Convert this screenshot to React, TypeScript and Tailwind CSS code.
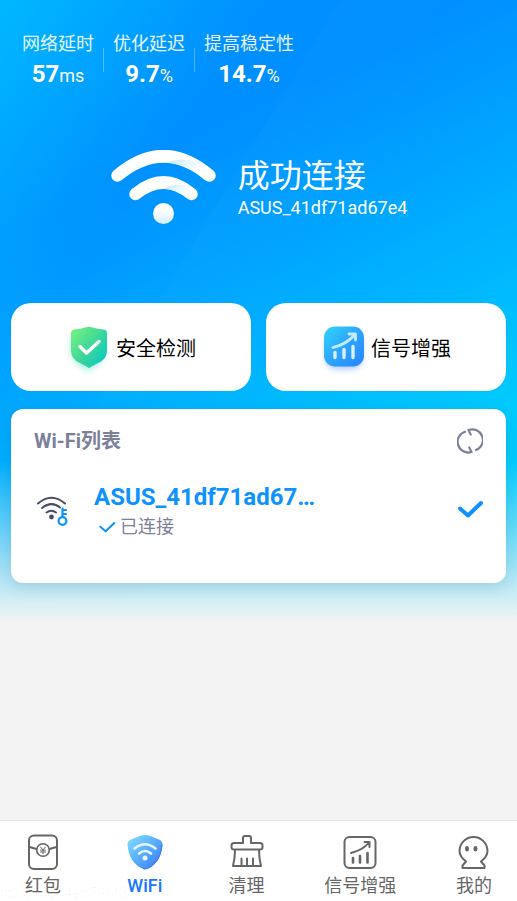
import type { ReactNode } from "react";

const strokeProps = {
  fill: "none",
  stroke: "currentColor",
  strokeLinecap: "round" as const,
  strokeLinejoin: "round" as const,
};

function HeroWifi() {
  return (
    <svg width="108" height="76" viewBox="0 0 108 76" aria-hidden="true">
      <defs>
        <linearGradient id="dot" x1="0" y1="0" x2="0" y2="1">
          <stop offset="0.3" stopColor="#fff" />
          <stop offset="1" stopColor="#d3eefd" />
        </linearGradient>
        <linearGradient id="sheen" x1="0" y1="0" x2="1" y2="0.6">
          <stop offset="0" stopColor="#b9e4fc" />
          <stop offset="0.8" stopColor="#fff" />
        </linearGradient>
      </defs>
      <g fill="none" stroke="#fff" strokeWidth="12.500" strokeLinecap="round">
        <path d="M7.500 25.500Q53.500 -13 99.500 25.500" />
        <path d="M25.500 44Q53.500 21 81.500 44" />
      </g>
      <path d="M54 12.400Q71 7.500 89 12L100 25Q98 31 94.500 30Q76 12.600 54 12.400Z" fill="url(#sheen)" opacity="0.800" />
      <path d="M54 38.700Q64 33 75 35L84 44Q81 50 78 49Q66 38.700 54 38.700Z" fill="url(#sheen)" opacity="0.800" />
      <circle cx="53.500" cy="63.500" r="10.500" fill="url(#dot)" />
    </svg>
  );
}

function ShieldCheck() {
  return (
    <svg width="52" height="52" viewBox="0 0 52 52" aria-hidden="true">
      <defs>
        <linearGradient id="shieldL" x1="0" y1="0" x2="0.6" y2="1">
          <stop offset="0" stopColor="#7cf57c" />
          <stop offset="1" stopColor="#2fd0a0" />
        </linearGradient>
        <linearGradient id="shieldR" x1="0" y1="0" x2="0.6" y2="1">
          <stop offset="0" stopColor="#5fe57f" />
          <stop offset="1" stopColor="#0bc8c0" />
        </linearGradient>
        <filter id="soft" x="-30%" y="-30%" width="160%" height="160%">
          <feGaussianBlur stdDeviation="3" />
        </filter>
      </defs>
      <path d="M9 14L26 8L43 14V30Q40 42 26 48Q12 42 9 30Z" fill="#50dcc8" opacity="0.450" filter="url(#soft)" />
      <path d="M27 3.500Q17 6.500 12 6.500Q9 7 9 10.500V27.500Q9 34.500 15 38.500L24.500 43.500Q27 45 27 45Z" fill="url(#shieldL)" />
      <path d="M27 3.500Q37 6.500 42 6.500Q45 7 45 10.500V27.500Q45 34.500 39 38.500L29.500 43.500Q27 45 27 45Z" fill="url(#shieldR)" />
      <path d="M18 23.500L24.500 30L37 18.500" fill="none" stroke="#fff" strokeWidth="3.500" strokeLinecap="round" strokeLinejoin="round" />
    </svg>
  );
}

function BoostTile() {
  return (
    <svg width="52" height="52" viewBox="0 0 52 52" aria-hidden="true">
      <defs>
        <linearGradient id="tile" x1="0" y1="0" x2="1" y2="1">
          <stop offset="0" stopColor="#33d3fb" />
          <stop offset="0.5" stopColor="#2da5ff" />
          <stop offset="1" stopColor="#2683ff" />
        </linearGradient>
        <filter id="softTile" x="-30%" y="-30%" width="160%" height="160%">
          <feGaussianBlur stdDeviation="3" />
        </filter>
      </defs>
      <rect x="9" y="10" width="36" height="36" rx="10" fill="#4f8dff" opacity="0.500" filter="url(#softTile)" />
      <rect x="7" y="3.500" width="40" height="40" rx="11" fill="url(#tile)" />
      <path d="M18 29.500V34.500M27 26.500V34.500M36 23.500V34.500" stroke="#d9eeff" strokeWidth="3.400" strokeLinecap="round" />
      <path d="M16 24.500Q29 21.500 37 12.500" fill="none" stroke="#c4ecff" strokeWidth="2.800" strokeLinecap="round" />
      <path d="M32 11H38.500V17" fill="none" stroke="#c4ecff" strokeWidth="2.800" strokeLinecap="round" strokeLinejoin="round" />
    </svg>
  );
}

function RefreshIcon() {
  return (
    <svg width="26" height="26" viewBox="0 0 26 26" {...strokeProps} strokeWidth="2.200" aria-hidden="true">
      <path d="M8 3.800A10.500 10.500 0 0 0 14.500 24L12.300 19.500" />
      <path d="M19 22A10.500 10.500 0 0 0 11.500 2L13.700 6.500" />
    </svg>
  );
}

function SecuredWifi() {
  return (
    <svg width="34" height="32" viewBox="0 0 34 32" fill="none" strokeLinecap="round" aria-hidden="true">
      <g stroke="#474b63" strokeWidth="2">
        <path d="M4 8.500Q17.500 -3 31 8.500" />
        <path d="M8 13Q17.500 5.500 26 12.500" />
        <path d="M12.500 17.500Q17.500 14 22 17.500" />
      </g>
      <circle cx="17.500" cy="22" r="2.400" fill="#474b63" />
      <g stroke="#0d92ff" strokeWidth="2.200">
        <circle cx="28.500" cy="26" r="3.900" />
        <path d="M28.500 22V13.500M28.500 15H32M28.500 19H32" />
      </g>
    </svg>
  );
}

function Tick({ className, weight }: { className: string; weight: number }) {
  return (
    <svg className={className} viewBox="0 0 26 18" fill="none" stroke="#0d92ff" strokeWidth={weight} strokeLinecap="round" strokeLinejoin="round" aria-hidden="true">
      <path d="M3 8.500L11 15.500L24 3" />
    </svg>
  );
}

function PacketIcon() {
  return (
    <svg width="36" height="38" viewBox="0 0 36 38" {...strokeProps} strokeWidth="2" aria-hidden="true">
      <rect x="4" y="2.500" width="28" height="33.500" rx="5" />
      <path d="M4.500 14L11.500 16M24.500 16L31.500 14" />
      <circle cx="18" cy="17" r="6.300" strokeWidth="1.600" />
      <path d="M15.500 14L18 16.800L20.500 14M18 16.800V20.500M15.500 17.100H20.500M15.500 19H20.500" strokeWidth="1" />
    </svg>
  );
}

function WifiShield() {
  return (
    <svg width="38" height="38" viewBox="0 0 38 38" aria-hidden="true">
      <defs>
        <linearGradient id="nav" x1="0" y1="0" x2="1" y2="1">
          <stop offset="0" stopColor="#85e0ff" />
          <stop offset="0.500" stopColor="#57adfb" />
          <stop offset="1" stopColor="#3971f0" />
        </linearGradient>
      </defs>
      <path d="M15 2.500Q19 1.500 23 2.500L33 6.500Q37 8.500 36.500 12Q35.500 23 30 29.500Q26.500 33.500 22 35.500Q19 37 16 35.500Q11.500 33.500 8 29.500Q2.500 23 1.500 12Q1 8.500 5 6.500Z" fill="url(#nav)" />
      <path d="M36 12Q35 23 29.500 29.500Q26 33.500 22 35.300Q19 36.500 17 35.500" fill="none" stroke="#3879ed" strokeWidth="1" />
      <g fill="none" stroke="#e8f6ff" strokeWidth="2.600" strokeLinecap="round">
        <path d="M8.500 15.500Q19 7 29.500 15.500" />
        <path d="M13 20.500Q19 15.500 25 20.500" />
      </g>
      <circle cx="19" cy="25" r="2.500" fill="#e8f6ff" />
    </svg>
  );
}

function BroomIcon() {
  return (
    <svg width="36" height="38" viewBox="0 0 36 38" {...strokeProps} strokeWidth="2" aria-hidden="true">
      <path d="M14 10V5Q14 3 16 3H20Q22 3 22 5V10H31Q33.500 10 33.500 12.500V14Q33.500 16.500 31 16.500H5Q2.500 16.500 2.500 14V12.500Q2.500 10 5 10Z" />
      <path d="M6 17Q6 25 4 33H32Q30 25 30 17M12.500 25.500V32.500M18 25.500V32.500M24 25.500V32.500" />
    </svg>
  );
}

function BoostIcon() {
  return (
    <svg width="36" height="38" viewBox="0 0 36 38" {...strokeProps} strokeWidth="2" aria-hidden="true">
      <rect x="2.500" y="4" width="31" height="31" rx="5" />
      <path d="M11 25V29.500M18 23V29.500M25.500 20V29.500" strokeWidth="2.600" />
      <path d="M9 20Q21 17 27 9.500M22.500 9H27.500V14" />
    </svg>
  );
}

function ProfileIcon() {
  return (
    <svg width="36" height="38" viewBox="0 0 36 38" {...strokeProps} strokeWidth="2" aria-hidden="true">
      <path d="M10 28.500C7 26 3.500 23.500 3.500 18A14 14 0 0 1 31.500 18C31.500 23.500 28 26 25 28.500L28.500 32.500V35H6.500V32.500Z" />
      <path d="M11 15V16.500M19.500 15V16.500" strokeWidth="3.800" />
    </svg>
  );
}

function Stat({ label, value, unit }: { label: string; value: string; unit: string }) {
  return (
    <div className="flex flex-col items-center">
      <dt className="text-lg leading-6 text-white/90">{label}</dt>
      <dd className="mt-0.5 text-2xl leading-8 font-bold">
        {value}
        <span className="text-lg font-normal">{unit}</span>
      </dd>
    </div>
  );
}

function Divider() {
  return <div className="mt-4 h-6 w-px bg-white/30" />;
}

function ActionCard({ icon, label }: { icon: ReactNode; label: string }) {
  return (
    <button type="button" className="flex h-22 items-center justify-center gap-0.5 rounded-[20px] bg-white pt-1 pr-1 text-xl text-black">
      {icon}
      <span>{label}</span>
    </button>
  );
}

const tabs = [
  { label: "红包", icon: <PacketIcon />, width: "w-10", tone: "text-[#666]" },
  { label: "WiFi", icon: <WifiShield />, width: "w-10", tone: "font-medium text-[#1677ff]" },
  { label: "清理", icon: <BroomIcon />, width: "w-10", tone: "text-[#666]" },
  { label: "信号增强", icon: <BoostIcon />, width: "w-16", tone: "text-[#666]" },
  { label: "我的", icon: <ProfileIcon />, width: "w-10", tone: "text-[#666]" },
];

export default function App() {
  return (
    <div className="flex min-h-screen flex-col bg-[#f3f3f3] bg-[linear-gradient(to_bottom,transparent_460px,#f3f3f3_622px),linear-gradient(121deg,rgba(255,255,255,0)_291px,rgba(255,255,255,0.015)_292px,rgba(255,255,255,0)_420px),linear-gradient(125deg,#00b8ff_0px,rgba(0,144,255,0)_220px),linear-gradient(153deg,#008fff_210px,#00ccff_600px)] font-[Roboto,'Noto_Sans_CJK_SC',sans-serif]">
      <header className="px-[22px] pt-8 text-white">
        <dl className="flex gap-[9px]">
          <Stat label="网络延时" value="57" unit="ms" />
          <Divider />
          <Stat label="优化延迟" value="9.7" unit="%" />
          <Divider />
          <Stat label="提高稳定性" value="14.7" unit="%" />
        </dl>
        <div className="mt-15 flex items-center justify-center gap-5">
          <HeroWifi />
          <div>
            <h1 className="text-[32px] leading-10">成功连接</h1>
            <p className="text-lg leading-6">ASUS_41df71ad67e4</p>
          </div>
        </div>
      </header>

      <main className="mt-[77px] flex grow flex-col gap-[18px] px-[11px]">
        <div className="grid grid-cols-2 gap-[15px]">
          <ActionCard icon={<ShieldCheck />} label="安全检测" />
          <ActionCard icon={<BoostTile />} label="信号增强" />
        </div>

        <section className="rounded-xl bg-white px-[23px] pt-4 pb-[42px] shadow-[0_4px_16px_rgba(0,60,100,0.15)]">
          <div className="flex items-center justify-between">
            <h2 className="text-xl leading-8 font-bold text-[#7c819a]">Wi-Fi列表</h2>
            <button type="button" aria-label="刷新" className="text-[#7c819a]">
              <RefreshIcon />
            </button>
          </div>
          <div className="mt-6 flex items-center">
            <SecuredWifi />
            <div className="ml-[26px] grow">
              <p className="text-2xl leading-8 font-bold text-[#0d92ff]">ASUS_41df71ad67…</p>
              <p className="flex items-center gap-1 pl-1 text-lg leading-7 text-[#7c819a]">
                <Tick className="h-3 w-[18px]" weight={3} />
                已连接
              </p>
            </div>
            <Tick className="mb-1 h-[18px] w-[26px]" weight={4} />
          </div>
        </section>
      </main>

      <nav className="relative flex justify-between border-t border-[#e8e8e8] bg-white px-[23px] pt-3">
        <span className="absolute bottom-0 left-0 text-[15px] leading-4 text-black/3">fd3ba5dd4eb596f3</span>
        {tabs.map((tab) => (
          <a key={tab.label} href="#" className={`flex flex-col items-center text-lg whitespace-nowrap ${tab.width} ${tab.tone}`}>
            {tab.icon}
            <span className="leading-[30px]">{tab.label}</span>
          </a>
        ))}
      </nav>
    </div>
  );
}
